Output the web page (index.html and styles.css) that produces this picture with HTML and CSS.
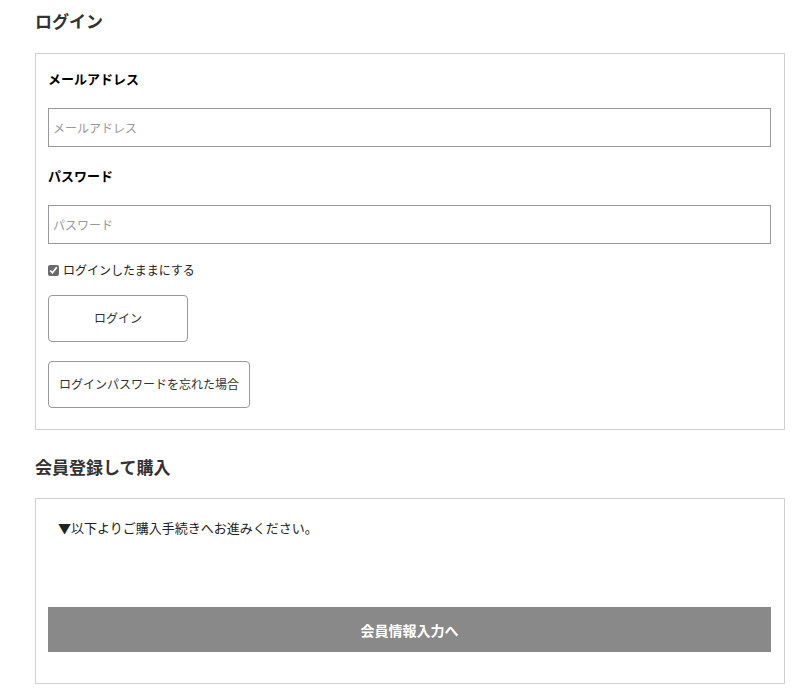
FILE: index.html
```html
<!DOCTYPE html>
<html lang="ja">

<head>
  <meta charset="UTF-8">
  <meta name="viewport" content="width=device-width, initial-scale=1.0">
  <title>ログイン</title>
  <link rel="stylesheet" href="styles.css">
</head>

<body>
  <div class="container">
    <h2 class="section-title">ログイン</h2>
    <div class="box login-box">
      <label class="field-label" for="email">メールアドレス</label>
      <input type="text" id="email" class="text-input" placeholder="メールアドレス">
      <label class="field-label" for="password">パスワード</label>
      <input type="password" id="password" class="text-input" placeholder="パスワード">
      <label class="remember">
        <input type="checkbox" checked>
        ログインしたままにする
      </label>
      <div class="btn-row">
        <button class="btn-outline btn-login">ログイン</button>
      </div>
      <div class="btn-row">
        <button class="btn-outline">ログインパスワードを忘れた場合</button>
      </div>
    </div>

    <h2 class="section-title second">会員登録して購入</h2>
    <div class="box register-box">
      <p class="register-text">▼以下よりご購入手続きへお進みください。</p>
      <button class="btn-gray">会員情報入力へ</button>
    </div>
  </div>
</body>

</html>
```

FILE: styles.css
```css
body {
  margin: 0;
  padding: 0;
  background: #fff;
  font-family: "Noto Sans CJK JP", "Noto Sans", sans-serif;
  color: #000;
}

.container {
  width: 750px;
  padding: 0 0 0 35px;
}

.section-title {
  margin: 0;
  padding-top: 8px;
  height: 53px;
  box-sizing: border-box;
  font-size: 17px;
  line-height: 26px;
  font-weight: bold;
  color: #333;
}

.section-title.second {
  margin-top: 21px;
  padding-top: 3px;
  height: 47px;
}

.box {
  border: 1px solid #d0d0d0;
  box-sizing: border-box;
}

.login-box {
  padding: 14px 13px 21px 12px;
}

.field-label {
  display: block;
  font-size: 13px;
  line-height: 22px;
  font-weight: bold;
  margin-bottom: 18px;
}

.text-input {
  display: block;
  width: 100%;
  height: 39px;
  box-sizing: border-box;
  margin: 0 0 18px;
  padding: 0 4px;
  border: 1px solid #999;
  border-radius: 0;
  font-family: inherit;
  font-size: 12px;
  outline: none;
}

.text-input::placeholder {
  color: #999;
}

.remember {
  display: flex;
  align-items: center;
  font-size: 12px;
  line-height: 18px;
  margin-top: -1px;
  color: #222;
}

.remember input {
  width: 11px;
  height: 11px;
  margin: 0 4px 0 0;
  accent-color: #6b6b6b;
}

.btn-row {
  margin-top: 16px;
}

.btn-row + .btn-row {
  margin-top: 19px;
}

.btn-outline {
  height: 47px;
  padding: 0 10px 2px;
  background: #fff;
  border: 1px solid #999;
  border-radius: 4px;
  font-family: inherit;
  font-size: 12px;
  color: #333;
  cursor: pointer;
}

.btn-login {
  width: 140px;
}

.register-box {
  padding: 18px 13px 31px 12px;
}

.register-text {
  margin: 0 0 0 10px;
  font-size: 13px;
  line-height: 22px;
  color: #222;
}

.btn-gray {
  display: block;
  width: 100%;
  height: 45px;
  margin-top: 68px;
  background: #898989;
  border: none;
  color: #fff;
  font-family: inherit;
  font-size: 14px;
  font-weight: bold;
  cursor: pointer;
}
```
